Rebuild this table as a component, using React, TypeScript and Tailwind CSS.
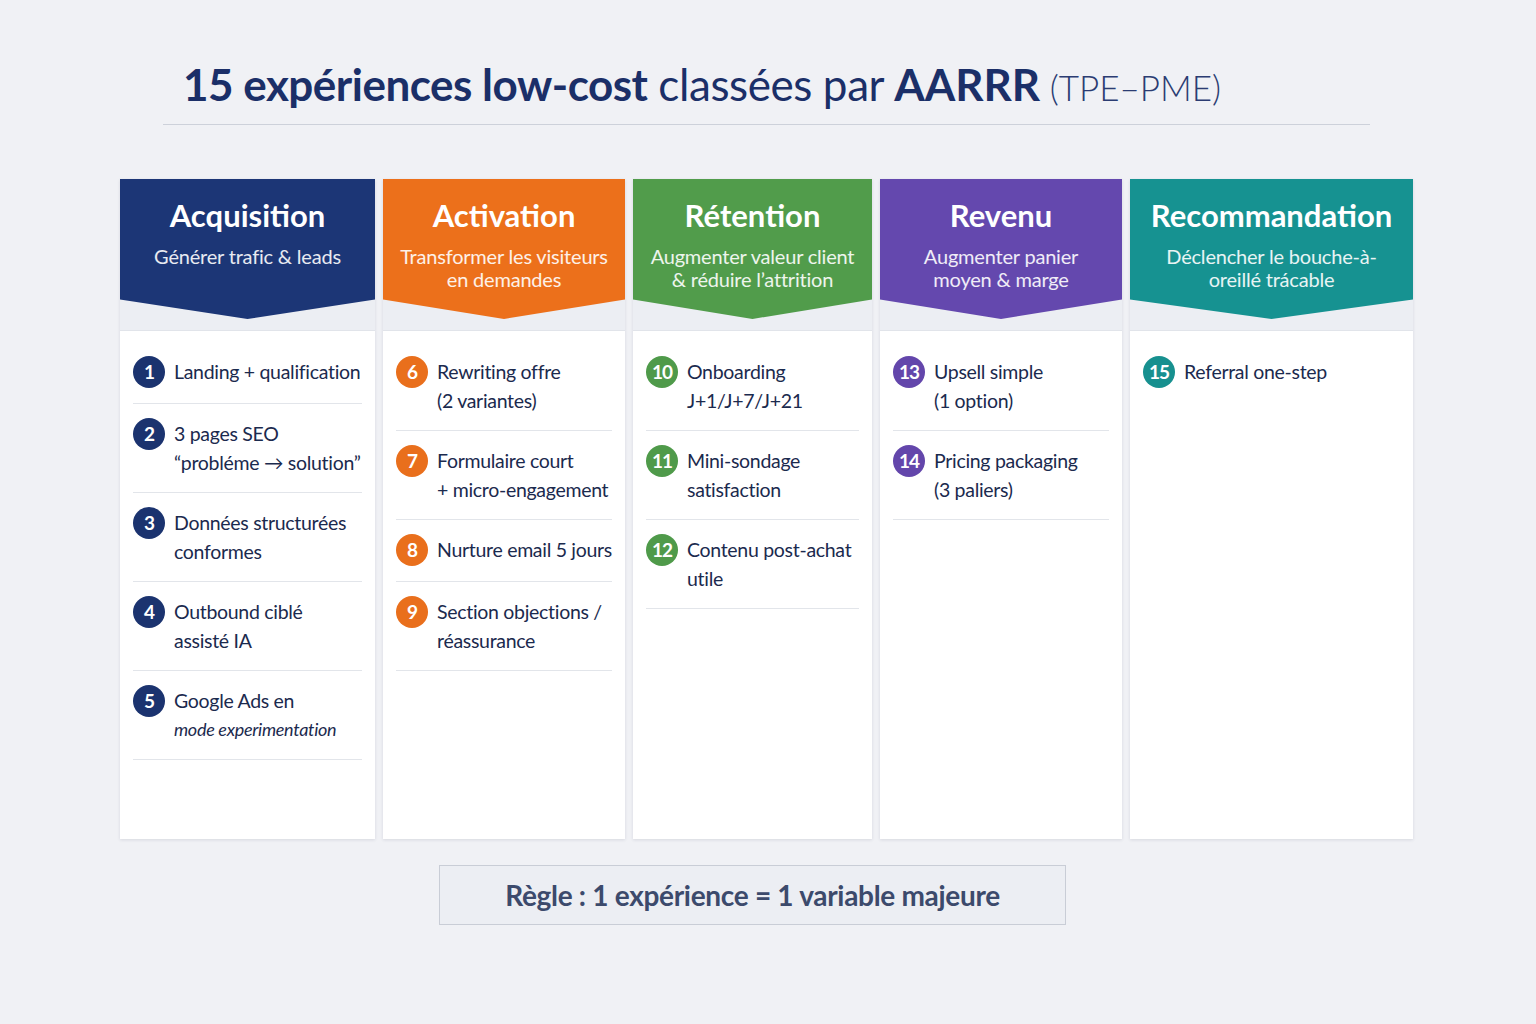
import React from 'react';

interface Item {
  n: number;
  lines: string[];
  italicSecond?: boolean;
}

interface Stage {
  title: string;
  sub: string[];
  color: string;
  badge: string;
  width: string;
  items: Item[];
}

const stages: Stage[] = [
  {
    title: 'Acquisition',
    sub: ['Générer trafic & leads'],
    color: 'bg-[#1c3676]',
    badge: 'bg-[#1b336f]',
    width: 'w-[255px]',
    items: [
      { n: 1, lines: ['Landing + qualification'] },
      { n: 2, lines: ['3 pages SEO', '“probléme → solution”'] },
      { n: 3, lines: ['Données structurées', 'conformes'] },
      { n: 4, lines: ['Outbound ciblé', 'assisté IA'] },
      { n: 5, lines: ['Google Ads en', 'mode experimentation'], italicSecond: true },
    ],
  },
  {
    title: 'Activation',
    sub: ['Transformer les visiteurs', 'en demandes'],
    color: 'bg-[#ec701b]',
    badge: 'bg-[#e96f1c]',
    width: 'w-[242px]',
    items: [
      { n: 6, lines: ['Rewriting offre', '(2 variantes)'] },
      { n: 7, lines: ['Formulaire court', '+ micro-engagement'] },
      { n: 8, lines: ['Nurture email 5 jours'] },
      { n: 9, lines: ['Section objections /', 'réassurance'] },
    ],
  },
  {
    title: 'Rétention',
    sub: ['Augmenter valeur client', '& réduire l’attrition'],
    color: 'bg-[#519c4b]',
    badge: 'bg-[#4f9a4a]',
    width: 'w-[239px]',
    items: [
      { n: 10, lines: ['Onboarding', 'J+1/J+7/J+21'] },
      { n: 11, lines: ['Mini-sondage', 'satisfaction'] },
      { n: 12, lines: ['Contenu post-achat', 'utile'] },
    ],
  },
  {
    title: 'Revenu',
    sub: ['Augmenter panier', 'moyen & marge'],
    color: 'bg-[#6448ae]',
    badge: 'bg-[#6346ab]',
    width: 'w-[242px]',
    items: [
      { n: 13, lines: ['Upsell simple', '(1 option)'] },
      { n: 14, lines: ['Pricing packaging', '(3 paliers)'] },
    ],
  },
  {
    title: 'Recommandation',
    sub: ['Déclencher le bouche-à-', 'oreillé trácable'],
    color: 'bg-[#169291]',
    badge: 'bg-[#17908f]',
    width: 'w-[283px]',
    items: [{ n: 15, lines: ['Referral one-step'] }],
  },
];

const font = { fontFamily: 'Lato, "Open Sans", sans-serif' };

function StageColumn({ stage }: { stage: Stage }) {
  const last = stage.items.length - 1;
  return (
    <div className={`${stage.width} flex flex-col h-[660px] bg-white shadow-[0_1px_3px_rgba(30,40,70,0.12)]`}>
      {/* header with chevron */}
      <div className="h-[152px] bg-[#eceef3] border-b border-[#e1e4ea]">
        <div
          className={`${stage.color} h-[140px] text-white text-center pt-[17px] [clip-path:polygon(0_0,100%_0,100%_86%,50%_100%,0_86%)]`}
        >
          <div className="text-[31px] leading-[38px] font-bold">{stage.title}</div>
          <div className="mt-[11px] text-[20px] leading-[23px] text-white/90 tracking-[-0.2px]">
            {stage.sub.map((s) => (
              <div key={s}>{s}</div>
            ))}
          </div>
        </div>
      </div>

      {/* items */}
      <div className="pt-[11px] mx-[13px]">
        {stage.items.map((it, i) => (
          <div
            key={it.n}
            className={`flex items-start gap-[9px] py-[15px] ${stage.items.length > 1 || i < last ? 'border-b border-[#e2e5ea]' : ''}`}
          >
            <div
              className={`${stage.badge} shrink-0 -mt-[1px] w-[32px] h-[32px] rounded-full text-white flex items-center justify-center text-[19px] font-bold tracking-[-1px]`}
            >
              {it.n}
            </div>
            <div className="text-[19.5px] leading-[29px] text-[#1b2a4e] tracking-[-0.3px] whitespace-nowrap">
              {it.lines.map((l, j) => (
                <div key={l} className={it.italicSecond && j === 1 ? 'italic text-[18px]' : ''}>
                  {l}
                </div>
              ))}
            </div>
          </div>
        ))}
      </div>
    </div>
  );
}

export default function App() {
  return (
    <div className="w-full h-[1024px] bg-[#f0f1f5] overflow-hidden" style={font}>
      <div className="pt-[56px] pl-[183px] text-[#1b2f68] whitespace-nowrap leading-[56px]">
        <span className="text-[44px] font-bold tracking-[-0.5px]">15 expériences low-cost</span>
        <span className="text-[44px] tracking-[-0.4px]"> classées par </span>
        <span className="text-[44px] font-bold">AARRR</span>
        <span className="text-[35px] font-light text-[#2b3c72]"> (TPE–PME)</span>
      </div>
      <div className="ml-[163px] mt-[1px] w-[1207px] h-px bg-[#cdd1da]" />

      <div className="mt-[54px] ml-[120px] flex gap-2">
        {stages.map((s) => (
          <StageColumn key={s.title} stage={s} />
        ))}
      </div>

      <div className="mt-[26px] ml-[439px] w-[627px] h-[60px] bg-[#eceef3] border border-[#c9cdd6] flex items-center justify-center">
        <span className="text-[28px] font-bold text-[#3c4a6c] tracking-[-0.3px]">
          Règle : 1 expérience = 1 variable majeure
        </span>
      </div>
    </div>
  );
}
